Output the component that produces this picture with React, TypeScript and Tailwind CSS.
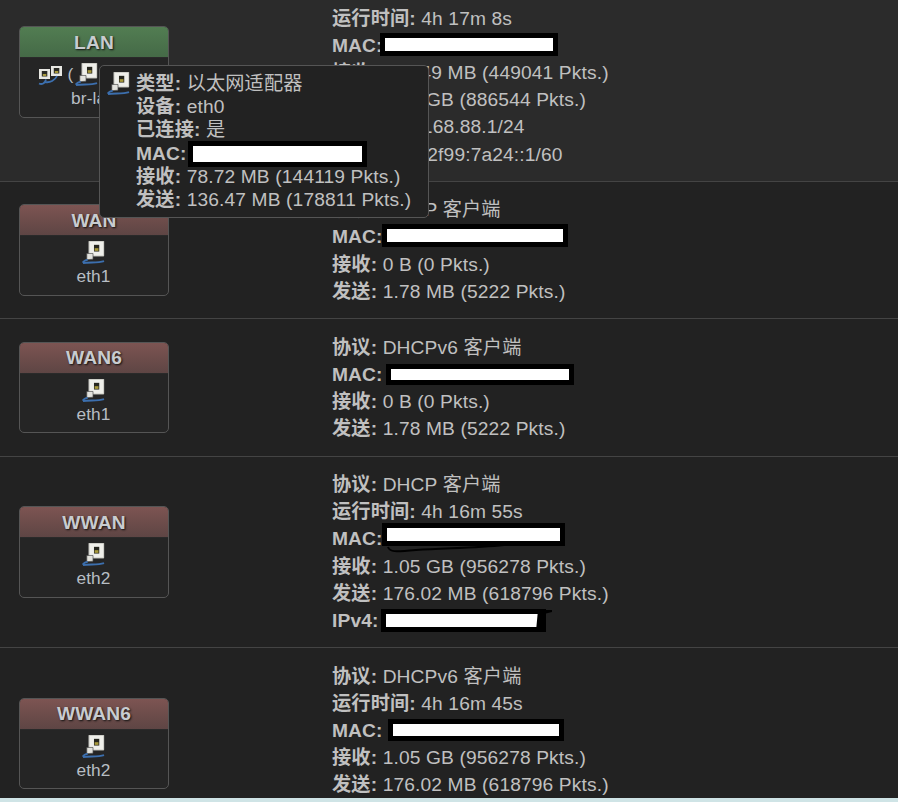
import React from "react";

function EthIcon({ className }: { className: string }) {
  return (
    <svg viewBox="0 0 24 24" className={className}>
      <rect x="7" y="0" width="16" height="16" rx="0.6" fill="#efefea" />
      <rect x="7.3" y="0.3" width="15.4" height="15.4" rx="0.6" fill="none" stroke="#a8a8a0" strokeWidth="0.6" />
      <rect x="12.5" y="4" width="5.5" height="7" fill="#26261e" />
      <rect x="13.2" y="7.5" width="4" height="2.8" fill="#a89a3c" />
      <polygon points="5,13 11.5,13 11.5,19 5,19.5" fill="#e2e2dd" stroke="#4a4a4a" strokeWidth="0.7" />
      <path d="M0.7 22.6 C1.8 20.5 3.5 19.8 6 19.6" stroke="#3c6fae" strokeWidth="1.8" fill="none" />
      <path d="M1 23 C8 21.6 16 23.4 23 21" stroke="#3c6fae" strokeWidth="2" fill="none" />
    </svg>
  );
}

function BridgeIcon() {
  return (
    <svg viewBox="0 0 24 20" className="w-[24px] h-[20px]">
      <rect x="1" y="4" width="11" height="10" fill="#e8e8e3" />
      <rect x="3.8" y="6" width="5.5" height="5.5" fill="#2a2a24" />
      <rect x="4.8" y="9" width="3.5" height="2" fill="#a89a3c" />
      <rect x="13" y="1" width="11" height="10" fill="#e8e8e3" />
      <rect x="15.8" y="3" width="5.5" height="5.5" fill="#2a2a24" />
      <rect x="16.8" y="6" width="3.5" height="2" fill="#a89a3c" />
      <path d="M1 18.5 C4 19.8 7 18.5 8 14.5" stroke="#3c6fae" strokeWidth="1.8" fill="none" />
      <path d="M7 17 C12 18 17 15.5 19 11" stroke="#3c6fae" strokeWidth="1.8" fill="none" />
    </svg>
  );
}

function Redact({ className, children }: { className: string; children?: React.ReactNode }) {
  return (
    <span className={"relative inline-block align-top box-content border-[5px] border-black bg-white " + className}>
      {children}
    </span>
  );
}

function Line({ label, children }: { label: string; children?: React.ReactNode }) {
  return (
    <div className="whitespace-nowrap">
      <b className="font-bold">{label}:</b>
      {children}
    </div>
  );
}

function Card({ name, header, icons, device }: { name: string; header: string; icons: React.ReactNode; device: string }) {
  return (
    <div className="w-[150px] h-[91.4px] shrink-0 rounded-[5px] border border-[#555] bg-[#252525] overflow-hidden flex flex-col">
      <div className={"h-[31px] shrink-0 flex items-center justify-center font-bold text-[19.2px] text-[#c8ccd0] [text-shadow:1px_1px_2px_#111] border-b border-[#2a2a2a] " + header}>
        {name}
      </div>
      <div className="flex-1 flex flex-col items-center pt-[4px]">
        <div className="h-[25px] flex items-center text-[17.3px] text-[#b8bec4]">{icons}</div>
        <div className="text-[17.3px] leading-[23px] text-[#b8bec4] -ml-px">{device}</div>
      </div>
    </div>
  );
}

function Row({ card, children, className }: { card: React.ReactNode; children: React.ReactNode; className: string }) {
  return (
    <div className={"flex items-center pl-[19px] border-b border-[#444] " + className}>
      {card}
      <div className="ml-[163px] pt-[14.25px] pb-[13.25px]">{children}</div>
    </div>
  );
}

const GREEN = "bg-gradient-to-b from-[#527d52] to-[#456a47]";
const RED = "bg-gradient-to-b from-[#7d5452] to-[#5e4544]";

export default function App() {
  const eth = <EthIcon className="w-[23px] h-[23px] -ml-[2px]" />;
  return (
    <div className="relative w-[898px] h-[802px] overflow-hidden flex flex-col bg-[#222] text-[#c0c0c0] text-[19.2px] tracking-[0.13px] leading-[27.2px] font-['Liberation_Sans','Noto_Sans_CJK_SC',sans-serif]">
      <div className="h-[798px] overflow-hidden">
        <div className="-mt-[36.9px]">
          <Row
            className="bg-[#2b2b2b]"
            card={
              <Card
                name="LAN"
                header={GREEN}
                device="br-lan"
                icons={
                  <div className="w-[113px] flex items-center">
                    <BridgeIcon />
                    <span className="ml-[6px] mr-[2px]">(</span>
                    <EthIcon className="w-[23px] h-[23px] shrink-0" />
                  </div>
                }
              />
            }
          >
            <div className="h-[27.2px]" />
            <Line label="运行时间"> 4h 17m 8s</Line>
            <Line label="MAC">
              <Redact className="ml-[-3px] mt-[1px] w-[168px] h-[13px]" />
            </Line>
            <Line label="接收"> 130.49 MB (449041 Pkts.)</Line>
            <Line label="发送"> 1.32 GB (886544 Pkts.)</Line>
            <Line label="IPv4"> 192.168.88.1/24</Line>
            <Line label="IPv6"> fd00:2f99:7a24::1/60</Line>
          </Row>
          <Row className="" card={<Card name="WAN" header={RED} device="eth1" icons={eth} />}>
            <Line label="协议"> DHCP 客户端</Line>
            <Line label="MAC">
              <Redact className="ml-[-1px] mt-[0.5px] w-[176px] h-[13px]" />
            </Line>
            <Line label="接收"> 0 B (0 Pkts.)</Line>
            <Line label="发送"> 1.78 MB (5222 Pkts.)</Line>
          </Row>
          <Row className="" card={<Card name="WAN6" header={RED} device="eth1" icons={eth} />}>
            <Line label="协议"> DHCPv6 客户端</Line>
            <Line label="MAC">
              <Redact className="ml-[3px] mt-[3px] w-[178px] h-[11px]" />
            </Line>
            <Line label="接收"> 0 B (0 Pkts.)</Line>
            <Line label="发送"> 1.78 MB (5222 Pkts.)</Line>
          </Row>
          <Row className="" card={<Card name="WWAN" header={RED} device="eth2" icons={eth} />}>
            <Line label="协议"> DHCP 客户端</Line>
            <Line label="运行时间"> 4h 16m 55s</Line>
            <Line label="MAC">
              <Redact className="ml-[-1px] mt-[-2px] w-[173px] h-[13px]">
                <svg viewBox="0 0 120 10" className="absolute left-[-1px] top-[17px] w-[120px] h-[10px]">
                  <path d="M2 2 C4 7 8 7 30 5 C60 3 90 3 118 0" stroke="#000" strokeWidth="2" fill="none" />
                </svg>
              </Redact>
            </Line>
            <Line label="接收"> 1.05 GB (956278 Pkts.)</Line>
            <Line label="发送"> 176.02 MB (618796 Pkts.)</Line>
            <Line label="IPv4">
              <Redact className="ml-[2px] mt-[2px] w-[155px] h-[13px]">
                <svg viewBox="0 0 30 24" className="absolute left-[150px] top-[-5px] w-[30px] h-[24px]">
                  <path d="M2 1 L16 1 L16 3 L8 5 L6 20 L0 22Z" fill="#000" />
                </svg>
              </Redact>
            </Line>
          </Row>
          <Row className="" card={<Card name="WWAN6" header={RED} device="eth2" icons={eth} />}>
            <Line label="协议"> DHCPv6 客户端</Line>
            <Line label="运行时间"> 4h 16m 45s</Line>
            <Line label="MAC">
              <Redact className="ml-[5px] mt-[2px] w-[166px] h-[12px]" />
            </Line>
            <Line label="接收"> 1.05 GB (956278 Pkts.)</Line>
            <Line label="发送"> 176.02 MB (618796 Pkts.)</Line>
            <div className="h-[27.2px]" />
          </Row>
        </div>
      </div>
      <div className="h-[4px] bg-[#cfe4e6]" />

      <div className="absolute left-[99px] top-[65px] w-[330px] h-[153px] rounded-[5px] border border-[#555] bg-[#222] flex pl-[7px] pt-[6px] leading-[23.2px]">
        <EthIcon className="w-[23px] h-[23px] shrink-0" />
        <div className="ml-[6px]">
          <Line label="类型"> 以太网适配器</Line>
          <Line label="设备"> eth0</Line>
          <Line label="已连接"> 是</Line>
          <Line label="MAC">
            <Redact className="ml-[1px] mt-[-1px] mb-[-2px] w-[169px] h-[16px]" />
          </Line>
          <Line label="接收"> 78.72 MB (144119 Pkts.)</Line>
          <Line label="发送"> 136.47 MB (178811 Pkts.)</Line>
        </div>
      </div>
    </div>
  );
}
